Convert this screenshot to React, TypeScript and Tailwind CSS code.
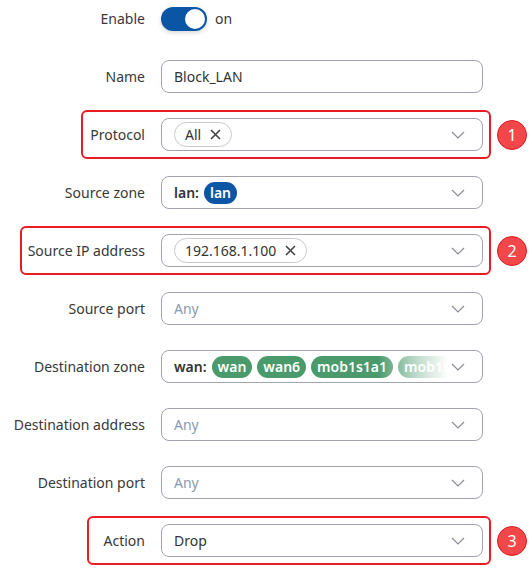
import React from "react";

const Chevron = () => (
  <svg width="14" height="8" viewBox="0 0 14 8" className="shrink-0">
    <path d="M1 1l6 6 6-6" fill="none" stroke="#8c8c96" strokeWidth="1.2" />
  </svg>
);

const Cross = () => (
  <svg width="11" height="11" viewBox="0 0 11 11" className="ml-[9px]">
    <path d="M1 1l9 9M10 1l-9 9" stroke="#444" strokeWidth="1.6" />
  </svg>
);

const Select = ({ children }: { children?: React.ReactNode }) => (
  <div className="flex items-center h-[33px] w-[322px] border border-[#a3a3ad] rounded-[8px] pl-3 pr-[17px]">
    <div className="flex-1 flex items-center gap-[5px] overflow-hidden">{children}</div>
    <Chevron />
  </div>
);

const Chip = ({ text }: { text: string }) => (
  <span className="flex items-center h-[25px] px-[10px] border border-[#c9c9c9] rounded-full text-[#333]">
    {text}
    <Cross />
  </span>
);

const Zone = ({ text, color }: { text: string; color: string }) => (
  <span className={`${color} text-white font-semibold rounded-full h-[22px] px-[6px] flex items-center shrink-0`}>{text}</span>
);

const Row = ({
  label,
  children,
  mark,
  box,
}: {
  label: string;
  children: React.ReactNode;
  mark?: string;
  box?: string;
}) => (
  <div className="relative flex items-center h-[33px]">
    {mark && <div className={`absolute -top-[8px] -bottom-[8px] right-[41px] border-2 border-[#ec1c24] rounded-[6px] ${box}`} />}
    <div className="w-[145px] text-right text-[#383838]">{label}</div>
    <div className="ml-4">{children}</div>
    {mark && (
      <div className="absolute left-[497px] top-[2px] w-[30px] h-[30px] rounded-full bg-[#f4474a] border border-[#d9191e] flex items-center justify-center text-white text-[16px]">
        {mark}
      </div>
    )}
  </div>
);

const Any = () => <span className="text-[#8a9ab0]">Any</span>;

export default function App() {
  return (
    <div className="w-[532px] h-[574px] bg-white font-['Noto_Sans',sans-serif] text-[14px] text-[#333] overflow-hidden">
      <div className="flex flex-col gap-[25px] pt-[2px]">
        <Row label="Enable">
          <div className="flex items-center">
            <div className="w-[46px] h-[24px] rounded-full bg-[#0b55a5] flex items-center justify-end pr-[2px] shadow-[0_2px_4px_rgba(0,0,0,0.15)]">
              <div className="w-[20px] h-[20px] rounded-full bg-white" />
            </div>
            <span className="ml-[8px] text-[#383838]">on</span>
          </div>
        </Row>
        <Row label="Name">
          <div className="flex items-center h-[33px] w-[322px] border border-[#a3a3ad] rounded-[8px] pl-3">Block_LAN</div>
        </Row>
        <Row label="Protocol" mark="1" box="left-[81px]">
          <Select>
            <Chip text="All" />
          </Select>
        </Row>
        <Row label="Source zone">
          <Select>
            <span className="font-semibold text-[#333]">lan:</span>
            <Zone text="lan" color="bg-[#0b55a5]" />
          </Select>
        </Row>
        <Row label="Source IP address" mark="2" box="left-[20px]">
          <Select>
            <Chip text="192.168.1.100" />
          </Select>
        </Row>
        <Row label="Source port">
          <Select>
            <Any />
          </Select>
        </Row>
        <Row label="Destination zone">
          <Select>
            <span className="font-semibold text-[#333] shrink-0">wan:</span>
            <div className="relative flex items-center gap-[5px] overflow-hidden w-[236px]">
              <Zone text="wan" color="bg-[#4a9a6c]" />
              <Zone text="wan6" color="bg-[#4a9a6c]" />
              <Zone text="mob1s1a1" color="bg-[#4a9a6c]" />
              <Zone text="mob1s1a2" color="bg-[#4a9a6c]" />
              <div className="absolute right-0 top-0 bottom-0 w-[70px] bg-gradient-to-r from-white/0 via-white/60 to-white" />
            </div>
          </Select>
        </Row>
        <Row label="Destination address">
          <Select>
            <Any />
          </Select>
        </Row>
        <Row label="Destination port">
          <Select>
            <Any />
          </Select>
        </Row>
        <Row label="Action" mark="3" box="left-[87px]">
          <Select>
            <span>Drop</span>
          </Select>
        </Row>
      </div>
    </div>
  );
}
